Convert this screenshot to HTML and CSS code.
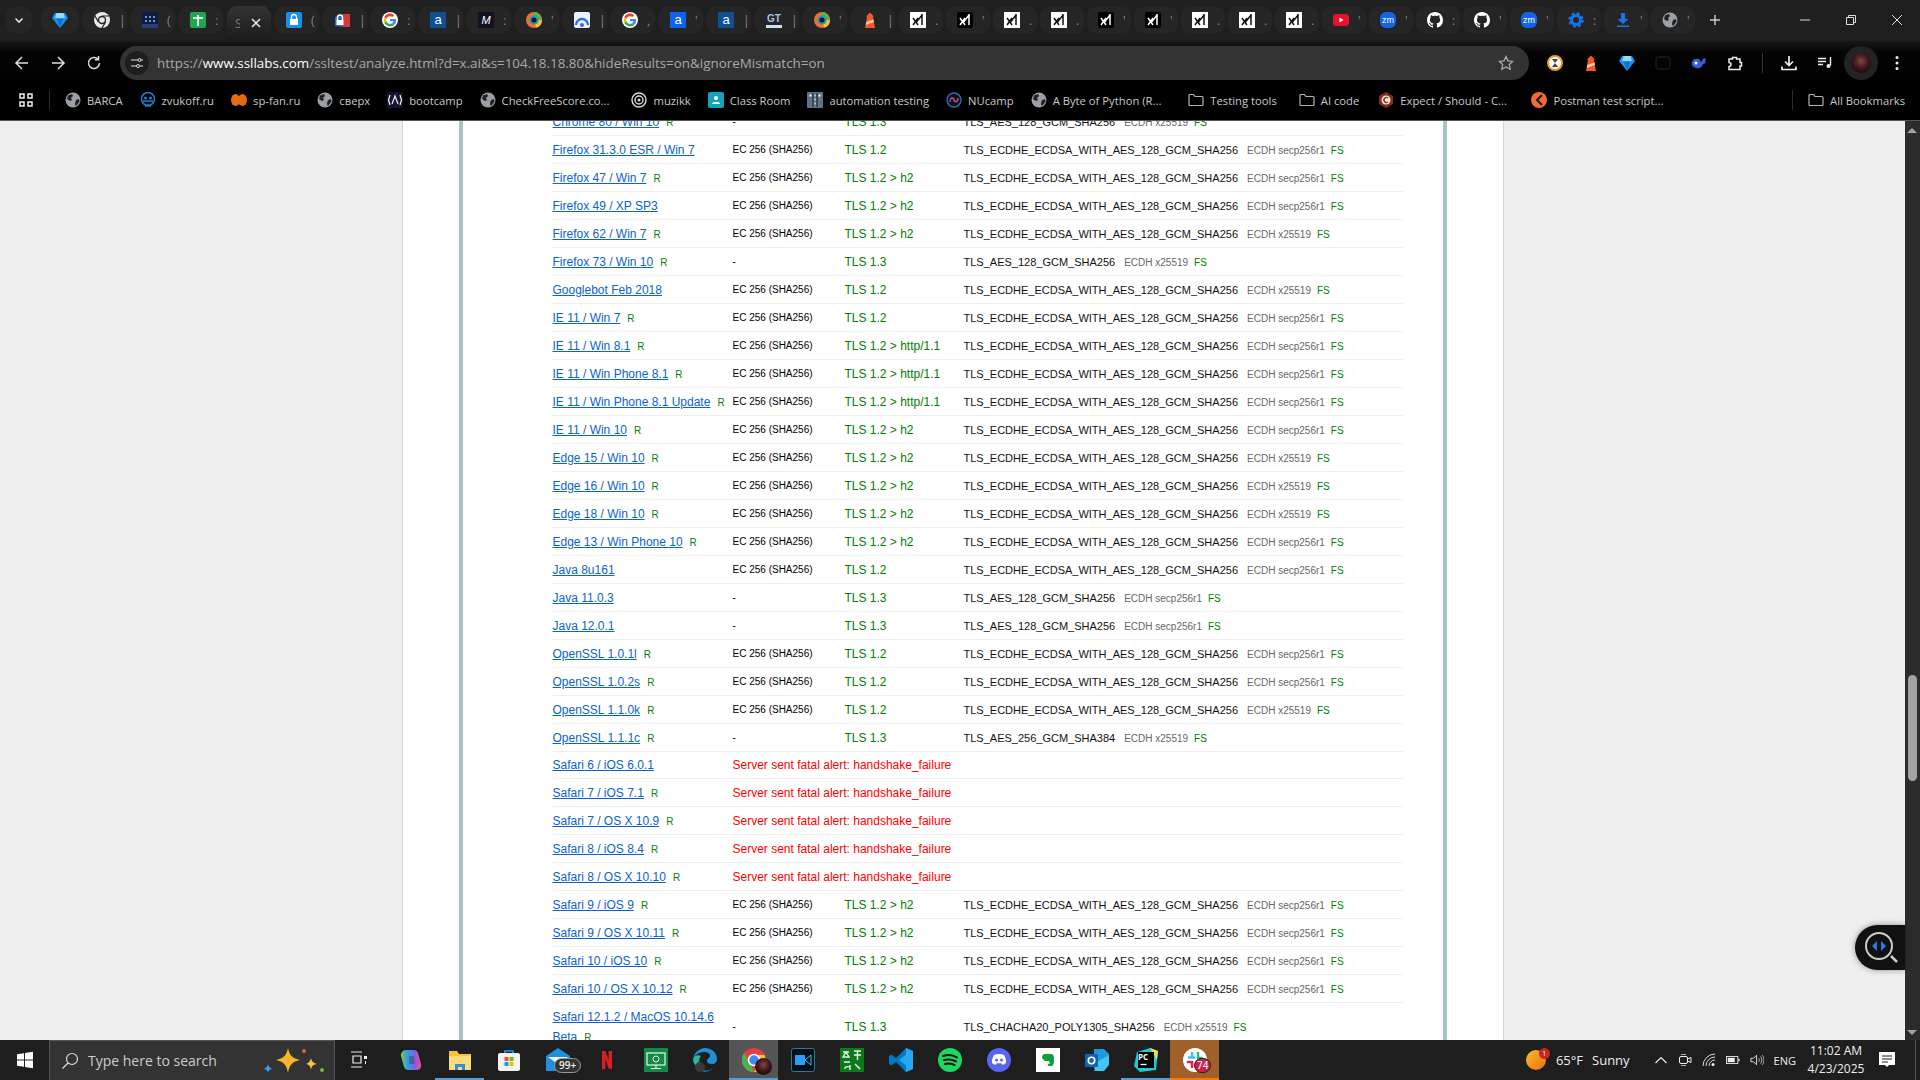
FILE: index.html
```html
<!DOCTYPE html>
<html lang="en">
  <head>
    <meta charset="UTF-8" />
    <title>SSL Server Test: x.ai</title>
    <link rel="stylesheet" href="styles.css">
  </head>
  <body>
    <svg class="defs" aria-hidden="true">
      <symbol id="gem" viewBox="0 0 16 16"><path fill="#1f8fe8" d="M3 1h10l3 5-8 10L0 6z"/><path fill="#8fdafc" d="M4.500 1h7l1.500 5H3z"/><path fill="#0f6fc4" d="M5 7h6l-3 8z"/></symbol>
      <symbol id="chrome" viewBox="0 0 16 16"><circle cx="8" cy="8" r="8" fill="#e8e8e8"/><circle cx="8" cy="8" r="4.200" fill="#222"/><circle cx="8" cy="8" r="2.800" fill="#e8e8e8"/><path stroke="#222" stroke-width="1.200" d="M8 4h7M4.400 10 1 4M11.600 10 8 16"/></symbol>
      <symbol id="goog" viewBox="-6 -6 60 60"><circle cx="24" cy="24" r="30" fill="#fff"/><path fill="#EA4335" d="M24 9.500c3.540 0 6.710 1.220 9.210 3.600l6.850-6.850C35.900 2.380 30.470 0 24 0 14.620 0 6.510 5.380 2.560 13.220l7.980 6.190C12.430 13.720 17.740 9.500 24 9.500z"/><path fill="#4285F4" d="M46.980 24.550c0-1.570-.15-3.090-.38-4.550H24v9.020h12.940c-.58 2.960-2.260 5.480-4.780 7.180l7.730 6c4.510-4.180 7.090-10.360 7.090-17.650z"/><path fill="#FBBC05" d="M10.530 28.590c-.48-1.450-.76-2.990-.76-4.590s.27-3.140.76-4.590l-7.980-6.190C.92 16.460 0 20.120 0 24c0 3.880.92 7.540 2.560 10.780l7.970-6.190z"/><path fill="#34A853" d="M24 48c6.480 0 11.930-2.130 15.890-5.810l-7.730-6c-2.150 1.450-4.920 2.300-8.160 2.300-6.260 0-11.570-4.220-13.470-9.910l-7.980 6.190C6.510 42.620 14.620 48 24 48z"/></symbol>
      <symbol id="ring" viewBox="0 0 16 16"><circle cx="8" cy="8" r="8" fill="#e8702a"/><path fill="#4fb84f" d="M8 0a8 8 0 0 1 8 8h-4a4 4 0 0 0-4-4z"/><path fill="#f2c230" d="M16 8a8 8 0 0 1-6 7.700L9 12a4 4 0 0 0 3-4z"/><circle cx="8" cy="8" r="4.600" fill="#2a93c9"/><circle cx="8" cy="8" r="2.600" fill="#1a1a1a"/></symbol>
      <symbol id="house" viewBox="0 0 16 16"><path fill="#f0592a" d="M5 5h6l2 11H3z"/><path fill="#f8c9aa" d="M4.300 10 11.500 7.500l.4 2.600-8 2.800z"/><path fill="#f0592a" d="M4.500 4 8 .5 11.500 4v1h-7z"/></symbol>
      <symbol id="xw" viewBox="0 0 16 16"><rect width="16" height="16" fill="#fff"/><path stroke="#111" stroke-width="1.500" d="m3 6 5 7m0-7-5 7m9-11v11M12.500 2.500 6.500 10"/></symbol>
      <symbol id="xb" viewBox="0 0 16 16"><rect width="16" height="16" rx="2" fill="#000"/><path stroke="#fff" stroke-width="1.500" d="m3 6 5 7m0-7-5 7m9-11v11M12.500 2.500 6.500 10"/></symbol>
      <symbol id="gh" viewBox="0 0 16 16"><path fill="#fff" d="M8 0C3.580 0 0 3.580 0 8c0 3.540 2.290 6.530 5.470 7.590.4.070.55-.17.55-.38 0-.19-.01-.82-.01-1.490-2.010.37-2.530-.49-2.690-.94-.09-.23-.48-.94-.82-1.130-.28-.15-.68-.52-.01-.53.630-.01 1.080.58 1.230.82.720 1.210 1.870.87 2.330.66.070-.52.28-.87.51-1.070-1.780-.2-3.640-.89-3.640-3.950 0-.87.31-1.590.82-2.150-.08-.2-.36-1.020.08-2.120 0 0 .67-.21 2.200.82.64-.18 1.320-.27 2-.27.68 0 1.360.09 2 .27 1.530-1.040 2.200-.82 2.200-.82.44 1.100.16 1.920.08 2.120.51.56.82 1.270.82 2.150 0 3.070-1.870 3.750-3.650 3.950.29.25.54.73.54 1.480 0 1.070-.01 1.930-.01 2.200 0 .21.15.46.55.38A8.013 8.013 0 0 0 16 8c0-4.420-3.580-8-8-8z"/></symbol>
      <symbol id="globe" viewBox="0 0 16 16"><circle cx="8" cy="8" r="7.500" fill="#9aa0a6"/><path fill="#222" d="M3 3.500 7 2l1 2-2 2 1 2-2 1-3-2zM11 8l3-1 .5 2.500L12 13l-1.500 1L10 11z"/></symbol>
      <symbol id="folder" viewBox="0 0 16 16"><path fill="none" stroke="#b4b4b4" stroke-width="1.200" d="M1 3.500a1 1 0 0 1 1-1h3.500L7 4.500h7a1 1 0 0 1 1 1v7a1 1 0 0 1-1 1H2a1 1 0 0 1-1-1z"/></symbol>
    </svg>

    <header class="chrome">
      <div class="tabstrip">
        <div class="tab-menu"><svg width="12" height="12" viewBox="0 0 12 12"><path d="m2.500 4.500 3.500 3.500 3.500-3.500" fill="none" stroke="#ddd" stroke-width="1.600"/></svg></div>
        <div class="tabs">
          <div class="tab pinned"><svg class="fav"><use href="#gem"/></svg></div>
          <div class="tab"><svg class="fav"><use href="#chrome"/></svg><i>|</i></div>
          <div class="tab"><svg class="fav" viewBox="0 0 16 16"><rect width="16" height="16" fill="#0d1b47"/><path stroke="#9db6e6" stroke-width="1.500" stroke-dasharray="2 2" d="M3 5h10M3 9h10"/><rect y="12" width="16" height="4" fill="#2d3e7a"/></svg><i>(</i></div>
          <div class="tab"><svg class="fav" viewBox="0 0 16 16"><rect width="16" height="16" rx="2" fill="#23a455"/><path stroke="#fff" stroke-width="1.600" d="M3 6h10M8 3v11"/></svg><i>:</i></div>
          <div class="tab active"><i>S</i><svg class="tab-x" width="10" height="10" viewBox="0 0 10 10"><path d="m1 1 8 8m0-8-8 8" stroke="#eee" stroke-width="1.500"/></svg></div>
          <div class="tab"><svg class="fav" viewBox="0 0 16 16"><rect width="16" height="16" rx="2" fill="#1a90e6"/><path fill="none" stroke="#fff" stroke-width="1.300" d="M5.500 7V5a2.500 2.500 0 0 1 5 0v2"/><rect x="4" y="7" width="8" height="6" fill="#fff"/></svg><i>(</i></div>
          <div class="tab"><svg class="fav" viewBox="0 0 16 16"><path fill="#d43a3a" d="M9 2h7v13H9z"/><path fill="#2a6fc0" d="M1 5l8-3v13l-8-1z"/><path fill="none" stroke="#fff" stroke-width="1.400" d="M3.500 8V5.500a2.500 2.500 0 0 1 5 0V8"/><rect x="2.500" y="8" width="7" height="5" fill="#fff"/></svg><i>|</i></div>
          <div class="tab"><svg class="fav"><use href="#goog"/></svg><i>:</i></div>
          <div class="tab"><span class="fav letter a-dark">a</span><i>|</i></div>
          <div class="tab"><span class="fav letter m-box">M</span><i>:</i></div>
          <div class="tab"><svg class="fav"><use href="#ring"/></svg><i>'</i></div>
          <div class="tab"><svg class="fav" viewBox="0 0 16 16"><rect width="16" height="16" rx="2" fill="#eaf2fb"/><path fill="none" stroke="#2b6fe0" stroke-width="2.400" d="M2 13a6 6 0 0 1 12 0"/><circle cx="8" cy="13" r="2" fill="#2b6fe0"/></svg><i>|</i></div>
          <div class="tab"><svg class="fav"><use href="#goog"/></svg><i>,</i></div>
          <div class="tab"><span class="fav letter a-bright">a</span><i>'</i></div>
          <div class="tab"><span class="fav letter a-dark">a</span><i>|</i></div>
          <div class="tab"><span class="fav letter gt">GT</span><i>|</i></div>
          <div class="tab"><svg class="fav"><use href="#ring"/></svg><i>'</i></div>
          <div class="tab"><svg class="fav"><use href="#house"/></svg><i>|</i></div>
          <div class="tab"><svg class="fav"><use href="#xw"/></svg><i>.</i></div>
          <div class="tab"><svg class="fav"><use href="#xb"/></svg><i>'</i></div>
          <div class="tab"><svg class="fav"><use href="#xw"/></svg><i>.</i></div>
          <div class="tab"><svg class="fav"><use href="#xw"/></svg><i>.</i></div>
          <div class="tab"><svg class="fav"><use href="#xb"/></svg><i>'</i></div>
          <div class="tab"><svg class="fav"><use href="#xb"/></svg><i>'</i></div>
          <div class="tab"><svg class="fav"><use href="#xw"/></svg><i>.</i></div>
          <div class="tab"><svg class="fav"><use href="#xw"/></svg><i>.</i></div>
          <div class="tab"><svg class="fav"><use href="#xw"/></svg><i>.</i></div>
          <div class="tab"><svg class="fav" viewBox="0 0 16 16"><rect y="2" width="16" height="12" rx="3" fill="#e8112d"/><path fill="#fff" d="m6.500 5.500 4 2.500-4 2.500z"/></svg><i>'</i></div>
          <div class="tab"><span class="fav letter zm">zm</span><i>'</i></div>
          <div class="tab"><svg class="fav"><use href="#gh"/></svg><i>:</i></div>
          <div class="tab"><svg class="fav"><use href="#gh"/></svg><i>'</i></div>
          <div class="tab"><span class="fav letter zm">zm</span><i>'</i></div>
          <div class="tab"><svg class="fav" viewBox="0 0 16 16"><circle cx="8" cy="8" r="4.500" fill="none" stroke="#1a73e8" stroke-width="3"/><circle cx="8" cy="8" r="6.500" fill="none" stroke="#1a73e8" stroke-width="2.400" stroke-dasharray="2.800 2.300"/></svg><i>:</i></div>
          <div class="tab"><svg class="fav" viewBox="0 0 16 16"><path fill="#1a73e8" d="M6 1h4v6h3.500L8 12 2.500 7H6zM2 13.500h12V15H2z"/></svg><i>'</i></div>
          <div class="tab"><svg class="fav"><use href="#globe"/></svg><i>'</i></div>
        </div>
        <svg class="newtab" width="12" height="12" viewBox="0 0 12 12"><path d="M6 1v10M1 6h10" stroke="#ccc" stroke-width="1.400"/></svg>
        <div class="winbtns">
          <svg width="10" height="10" viewBox="0 0 10 10"><path d="M0 5h10" stroke="#ddd"/></svg>
          <svg width="10" height="10" viewBox="0 0 10 10"><path d="M.5 2.500h7v7h-7zM2.500 2.500v-2h7v7h-2" fill="none" stroke="#ddd"/></svg>
          <svg width="10" height="10" viewBox="0 0 10 10"><path d="m0 0 10 10M10 0 0 10" stroke="#ddd"/></svg>
        </div>
      </div>

      <div class="toolbar">
        <svg class="nav" viewBox="0 0 16 16"><path d="M14 8H2.500M8 2 2 8l6 6" fill="none" stroke="#ddd" stroke-width="1.500"/></svg>
        <svg class="nav" viewBox="0 0 16 16"><path d="M2 8h11.500M8 2l6 6-6 6" fill="none" stroke="#ddd" stroke-width="1.500"/></svg>
        <svg class="nav" viewBox="0 0 16 16"><path d="M13.500 8A5.500 5.500 0 1 1 12 4.200M12.500 1v3.800H8.800" fill="none" stroke="#ddd" stroke-width="1.500"/></svg>
        <div class="omnibox">
          <span class="siteinfo"><svg width="14" height="14" viewBox="0 0 14 14"><path d="M1 4h7M1 10h5M10 10h3M11 4h2" stroke="#ddd" stroke-width="1.200"/><circle cx="9.500" cy="4" r="1.500" fill="none" stroke="#ddd"/><circle cx="8" cy="10" r="1.500" fill="none" stroke="#ddd"/></svg></span>
          <span class="url">https://<b>www.ssllabs.com</b>/ssltest/analyze.html?d=x.ai&amp;s=104.18.18.80&amp;hideResults=on&amp;ignoreMismatch=on</span>
          <svg class="star" width="16" height="16" viewBox="0 0 16 16"><path d="m8 1.500 2 4.300 4.700.6-3.400 3.200.9 4.700L8 12l-4.200 2.300.9-4.700L1.300 6.400 6 5.800z" fill="none" stroke="#aaa" stroke-width="1.300"/></svg>
        </div>
        <div class="extensions">
          <svg class="ext" viewBox="0 0 16 16"><circle cx="8" cy="8" r="7" fill="#fff" stroke="#f09a1a" stroke-width="2"/><path d="M5 4h6L5 12h6z" fill="#444"/></svg>
          <svg class="ext"><use href="#house"/></svg>
          <svg class="ext"><use href="#gem"/></svg>
          <svg class="ext" viewBox="0 0 16 16"><rect x="1" y="2" width="14" height="12" rx="2" fill="none" stroke="#222"/></svg>
          <svg class="ext" viewBox="0 0 16 16"><path fill="#3b5bdb" d="M1 7c1-3 4-4 7-3l2 3 3-4 2 1-1 3 1 1-3 1c-1 4-4 5-7 4C2 12 0 10 1 7z"/><circle cx="5" cy="8" r="1.500" fill="#fff"/></svg>
          <svg class="ext" viewBox="0 0 16 16"><path fill="none" stroke="#eee" stroke-width="1.500" d="M2 4h3.500V2.500h4V4H13v3.500h1.500v3.500H13v3.500H2v-3a2 2 0 0 0 0-4z"/></svg>
          <span class="tb-sep"></span>
          <svg class="ext" viewBox="0 0 16 16"><path d="M8 1v9M4 6.500 8 10.500l4-4M1 11.500V14.500h14v-3" fill="none" stroke="#eee" stroke-width="1.700"/></svg>
          <svg class="ext" viewBox="0 0 16 16"><path d="M1 3.500h8M1 6.500h8M1 9.500h5" stroke="#eee" stroke-width="1.400"/><path d="M13.500 2v8.500" stroke="#eee" stroke-width="1.400"/><circle cx="11.500" cy="11" r="2" fill="#eee"/></svg>
          <span class="avatar-pill"><span class="avatar"></span></span>
          <svg class="dots" viewBox="0 0 4 16"><circle cx="2" cy="2.500" r="1.500" fill="#eee"/><circle cx="2" cy="8" r="1.500" fill="#eee"/><circle cx="2" cy="13.500" r="1.500" fill="#eee"/></svg>
        </div>
      </div>

      <nav class="bookmarks">
        <svg class="apps" viewBox="0 0 14 14"><path d="M1 1h4v4H1zM9 1h4v4H9zM1 9h4v4H1zM9 9h4v4H9z" fill="none" stroke="#eee" stroke-width="1.500"/></svg>
        <span class="bm-sep"></span>
        <a class="bm"><svg class="bm-ic"><use href="#globe"/></svg>BARCA</a>
        <a class="bm"><svg class="bm-ic" viewBox="0 0 16 16"><circle cx="8" cy="7" r="6.500" fill="none" stroke="#1e7fd0" stroke-width="1.500"/><path d="M3 9h10M5 12l1 3M8 12v3M11 12l-1 3" stroke="#1e7fd0" stroke-width="1.500"/><circle cx="5.500" cy="6" r="1.500" fill="#1e7fd0"/><circle cx="10.500" cy="6" r="1.500" fill="#1e7fd0"/></svg>zvukoff.ru</a>
        <a class="bm"><svg class="bm-ic" viewBox="0 0 16 16"><ellipse cx="4.500" cy="8" rx="4.500" ry="6" fill="#e56a12"/><ellipse cx="11.500" cy="8" rx="4.500" ry="6" fill="#e56a12"/></svg>sp-fan.ru</a>
        <a class="bm"><svg class="bm-ic"><use href="#globe"/></svg>сверх</a>
        <a class="bm"><svg class="bm-ic" viewBox="0 0 16 16"><rect width="16" height="16" rx="3" fill="#151533"/><path d="M5 12 8 4l3 8M3 3 1.500 8 3 13M13 3l1.500 5-1.500 5" fill="none" stroke="#eee" stroke-width="1.200"/></svg>bootcamp</a>
        <a class="bm long"><svg class="bm-ic"><use href="#globe"/></svg>CheckFreeScore.co...</a>
        <a class="bm"><svg class="bm-ic" viewBox="0 0 16 16"><circle cx="8" cy="8" r="7" fill="none" stroke="#ddd" stroke-width="1.400"/><circle cx="8" cy="8" r="4" fill="none" stroke="#ddd" stroke-width="1.400"/><circle cx="8" cy="8" r="1.500" fill="#ddd"/></svg>muzikk</a>
        <a class="bm"><svg class="bm-ic" viewBox="0 0 16 16"><rect width="16" height="16" rx="2" fill="#12a3b8"/><circle cx="8" cy="6" r="2" fill="#fff"/><path d="M4 12c0-3 8-3 8 0z" fill="#fff"/></svg>Class Room</a>
        <a class="bm"><svg class="bm-ic" viewBox="0 0 16 16"><rect width="16" height="16" rx="1" fill="#5f7486"/><path d="M6 1v14M10 1v14" stroke="#1a1a1a"/><path d="M7.500 3.500h1M7.500 7.500h1M7.500 11.500h1M2.500 3.500h2M11.500 3.500h2" stroke="#fff" stroke-width="2"/></svg>automation testing</a>
        <a class="bm"><svg class="bm-ic" viewBox="0 0 16 16"><circle cx="8" cy="8" r="7" fill="#111" stroke="#2670c9" stroke-width="1.400"/><path d="M4 10c0-6 4-4 4-2s4 3 4-2" fill="none" stroke="#c04ab8" stroke-width="1.400"/></svg>NUcamp</a>
        <a class="bm cut-wide"><svg class="bm-ic"><use href="#globe"/></svg>A Byte of Python (R...</a>
        <a class="bm long"><svg class="bm-ic"><use href="#folder"/></svg>Testing tools</a>
        <a class="bm loose"><svg class="bm-ic"><use href="#folder"/></svg>AI code</a>
        <a class="bm cut"><svg class="bm-ic" viewBox="0 0 16 16"><path d="M8 0 15 4v8l-7 4-7-4V4z" fill="#8a2a1a"/><circle cx="8" cy="8" r="4.500" fill="#f3e8d8"/><path d="M10 6a2.500 2.500 0 1 0 0 4" fill="none" stroke="#8a2a1a" stroke-width="1.400"/></svg>Expect / Should - C...</a>
        <a class="bm"><svg class="bm-ic" viewBox="0 0 16 16"><circle cx="8" cy="8" r="8" fill="#ef6c35"/><path d="m11 3-5 5 5 5" fill="none" stroke="#1a1a1a" stroke-width="2"/></svg>Postman test script...</a>
        <span class="bm-end"><span class="bm-sep"></span><a class="bm"><svg class="bm-ic"><use href="#folder"/></svg>All Bookmarks</a></span>
      </nav>
    </header>

    <main class="viewport">
      <div class="page">
        <div class="sheet">
          <div class="report">
            <table class="sims">
              <tbody>
                <tr><td class="c-name"><a href="#">Chrome 80 / Win 10</a><span class="r">R</span></td><td class="c-cert">-</td><td class="c-proto">TLS 1.3</td><td><span class="suite">TLS_AES_128_GCM_SHA256</span><span class="kx">ECDH x25519</span><span class="fs">FS</span></td></tr>
                <tr><td class="c-name"><a href="#">Firefox 31.3.0 ESR / Win 7</a></td><td class="c-cert">EC 256 (SHA256)</td><td class="c-proto">TLS 1.2</td><td><span class="suite">TLS_ECDHE_ECDSA_WITH_AES_128_GCM_SHA256</span><span class="kx">ECDH secp256r1</span><span class="fs">FS</span></td></tr>
                <tr><td class="c-name"><a href="#">Firefox 47 / Win 7</a><span class="r">R</span></td><td class="c-cert">EC 256 (SHA256)</td><td class="c-proto">TLS 1.2 &gt; h2</td><td><span class="suite">TLS_ECDHE_ECDSA_WITH_AES_128_GCM_SHA256</span><span class="kx">ECDH secp256r1</span><span class="fs">FS</span></td></tr>
                <tr><td class="c-name"><a href="#">Firefox 49 / XP SP3</a></td><td class="c-cert">EC 256 (SHA256)</td><td class="c-proto">TLS 1.2 &gt; h2</td><td><span class="suite">TLS_ECDHE_ECDSA_WITH_AES_128_GCM_SHA256</span><span class="kx">ECDH secp256r1</span><span class="fs">FS</span></td></tr>
                <tr><td class="c-name"><a href="#">Firefox 62 / Win 7</a><span class="r">R</span></td><td class="c-cert">EC 256 (SHA256)</td><td class="c-proto">TLS 1.2 &gt; h2</td><td><span class="suite">TLS_ECDHE_ECDSA_WITH_AES_128_GCM_SHA256</span><span class="kx">ECDH x25519</span><span class="fs">FS</span></td></tr>
                <tr><td class="c-name"><a href="#">Firefox 73 / Win 10</a><span class="r">R</span></td><td class="c-cert">-</td><td class="c-proto">TLS 1.3</td><td><span class="suite">TLS_AES_128_GCM_SHA256</span><span class="kx">ECDH x25519</span><span class="fs">FS</span></td></tr>
                <tr><td class="c-name"><a href="#">Googlebot Feb 2018</a></td><td class="c-cert">EC 256 (SHA256)</td><td class="c-proto">TLS 1.2</td><td><span class="suite">TLS_ECDHE_ECDSA_WITH_AES_128_GCM_SHA256</span><span class="kx">ECDH x25519</span><span class="fs">FS</span></td></tr>
                <tr><td class="c-name"><a href="#">IE 11 / Win 7</a><span class="r">R</span></td><td class="c-cert">EC 256 (SHA256)</td><td class="c-proto">TLS 1.2</td><td><span class="suite">TLS_ECDHE_ECDSA_WITH_AES_128_GCM_SHA256</span><span class="kx">ECDH secp256r1</span><span class="fs">FS</span></td></tr>
                <tr><td class="c-name"><a href="#">IE 11 / Win 8.1</a><span class="r">R</span></td><td class="c-cert">EC 256 (SHA256)</td><td class="c-proto">TLS 1.2 &gt; http/1.1</td><td><span class="suite">TLS_ECDHE_ECDSA_WITH_AES_128_GCM_SHA256</span><span class="kx">ECDH secp256r1</span><span class="fs">FS</span></td></tr>
                <tr><td class="c-name"><a href="#">IE 11 / Win Phone 8.1</a><span class="r">R</span></td><td class="c-cert">EC 256 (SHA256)</td><td class="c-proto">TLS 1.2 &gt; http/1.1</td><td><span class="suite">TLS_ECDHE_ECDSA_WITH_AES_128_GCM_SHA256</span><span class="kx">ECDH secp256r1</span><span class="fs">FS</span></td></tr>
                <tr><td class="c-name"><a href="#">IE 11 / Win Phone 8.1 Update</a><span class="r">R</span></td><td class="c-cert">EC 256 (SHA256)</td><td class="c-proto">TLS 1.2 &gt; http/1.1</td><td><span class="suite">TLS_ECDHE_ECDSA_WITH_AES_128_GCM_SHA256</span><span class="kx">ECDH secp256r1</span><span class="fs">FS</span></td></tr>
                <tr><td class="c-name"><a href="#">IE 11 / Win 10</a><span class="r">R</span></td><td class="c-cert">EC 256 (SHA256)</td><td class="c-proto">TLS 1.2 &gt; h2</td><td><span class="suite">TLS_ECDHE_ECDSA_WITH_AES_128_GCM_SHA256</span><span class="kx">ECDH secp256r1</span><span class="fs">FS</span></td></tr>
                <tr><td class="c-name"><a href="#">Edge 15 / Win 10</a><span class="r">R</span></td><td class="c-cert">EC 256 (SHA256)</td><td class="c-proto">TLS 1.2 &gt; h2</td><td><span class="suite">TLS_ECDHE_ECDSA_WITH_AES_128_GCM_SHA256</span><span class="kx">ECDH x25519</span><span class="fs">FS</span></td></tr>
                <tr><td class="c-name"><a href="#">Edge 16 / Win 10</a><span class="r">R</span></td><td class="c-cert">EC 256 (SHA256)</td><td class="c-proto">TLS 1.2 &gt; h2</td><td><span class="suite">TLS_ECDHE_ECDSA_WITH_AES_128_GCM_SHA256</span><span class="kx">ECDH x25519</span><span class="fs">FS</span></td></tr>
                <tr><td class="c-name"><a href="#">Edge 18 / Win 10</a><span class="r">R</span></td><td class="c-cert">EC 256 (SHA256)</td><td class="c-proto">TLS 1.2 &gt; h2</td><td><span class="suite">TLS_ECDHE_ECDSA_WITH_AES_128_GCM_SHA256</span><span class="kx">ECDH x25519</span><span class="fs">FS</span></td></tr>
                <tr><td class="c-name"><a href="#">Edge 13 / Win Phone 10</a><span class="r">R</span></td><td class="c-cert">EC 256 (SHA256)</td><td class="c-proto">TLS 1.2 &gt; h2</td><td><span class="suite">TLS_ECDHE_ECDSA_WITH_AES_128_GCM_SHA256</span><span class="kx">ECDH secp256r1</span><span class="fs">FS</span></td></tr>
                <tr><td class="c-name"><a href="#">Java 8u161</a></td><td class="c-cert">EC 256 (SHA256)</td><td class="c-proto">TLS 1.2</td><td><span class="suite">TLS_ECDHE_ECDSA_WITH_AES_128_GCM_SHA256</span><span class="kx">ECDH secp256r1</span><span class="fs">FS</span></td></tr>
                <tr><td class="c-name"><a href="#">Java 11.0.3</a></td><td class="c-cert">-</td><td class="c-proto">TLS 1.3</td><td><span class="suite">TLS_AES_128_GCM_SHA256</span><span class="kx">ECDH secp256r1</span><span class="fs">FS</span></td></tr>
                <tr><td class="c-name"><a href="#">Java 12.0.1</a></td><td class="c-cert">-</td><td class="c-proto">TLS 1.3</td><td><span class="suite">TLS_AES_128_GCM_SHA256</span><span class="kx">ECDH secp256r1</span><span class="fs">FS</span></td></tr>
                <tr><td class="c-name"><a href="#">OpenSSL 1.0.1l</a><span class="r">R</span></td><td class="c-cert">EC 256 (SHA256)</td><td class="c-proto">TLS 1.2</td><td><span class="suite">TLS_ECDHE_ECDSA_WITH_AES_128_GCM_SHA256</span><span class="kx">ECDH secp256r1</span><span class="fs">FS</span></td></tr>
                <tr><td class="c-name"><a href="#">OpenSSL 1.0.2s</a><span class="r">R</span></td><td class="c-cert">EC 256 (SHA256)</td><td class="c-proto">TLS 1.2</td><td><span class="suite">TLS_ECDHE_ECDSA_WITH_AES_128_GCM_SHA256</span><span class="kx">ECDH secp256r1</span><span class="fs">FS</span></td></tr>
                <tr><td class="c-name"><a href="#">OpenSSL 1.1.0k</a><span class="r">R</span></td><td class="c-cert">EC 256 (SHA256)</td><td class="c-proto">TLS 1.2</td><td><span class="suite">TLS_ECDHE_ECDSA_WITH_AES_128_GCM_SHA256</span><span class="kx">ECDH x25519</span><span class="fs">FS</span></td></tr>
                <tr><td class="c-name"><a href="#">OpenSSL 1.1.1c</a><span class="r">R</span></td><td class="c-cert">-</td><td class="c-proto">TLS 1.3</td><td><span class="suite">TLS_AES_256_GCM_SHA384</span><span class="kx">ECDH x25519</span><span class="fs">FS</span></td></tr>
                <tr class="short"><td class="c-name"><a href="#">Safari 6 / iOS 6.0.1</a></td><td class="c-fail" colspan="3">Server sent fatal alert: handshake_failure</td></tr>
                <tr><td class="c-name"><a href="#">Safari 7 / iOS 7.1</a><span class="r">R</span></td><td class="c-fail" colspan="3">Server sent fatal alert: handshake_failure</td></tr>
                <tr><td class="c-name"><a href="#">Safari 7 / OS X 10.9</a><span class="r">R</span></td><td class="c-fail" colspan="3">Server sent fatal alert: handshake_failure</td></tr>
                <tr><td class="c-name"><a href="#">Safari 8 / iOS 8.4</a><span class="r">R</span></td><td class="c-fail" colspan="3">Server sent fatal alert: handshake_failure</td></tr>
                <tr><td class="c-name"><a href="#">Safari 8 / OS X 10.10</a><span class="r">R</span></td><td class="c-fail" colspan="3">Server sent fatal alert: handshake_failure</td></tr>
                <tr><td class="c-name"><a href="#">Safari 9 / iOS 9</a><span class="r">R</span></td><td class="c-cert">EC 256 (SHA256)</td><td class="c-proto">TLS 1.2 &gt; h2</td><td><span class="suite">TLS_ECDHE_ECDSA_WITH_AES_128_GCM_SHA256</span><span class="kx">ECDH secp256r1</span><span class="fs">FS</span></td></tr>
                <tr><td class="c-name"><a href="#">Safari 9 / OS X 10.11</a><span class="r">R</span></td><td class="c-cert">EC 256 (SHA256)</td><td class="c-proto">TLS 1.2 &gt; h2</td><td><span class="suite">TLS_ECDHE_ECDSA_WITH_AES_128_GCM_SHA256</span><span class="kx">ECDH secp256r1</span><span class="fs">FS</span></td></tr>
                <tr><td class="c-name"><a href="#">Safari 10 / iOS 10</a><span class="r">R</span></td><td class="c-cert">EC 256 (SHA256)</td><td class="c-proto">TLS 1.2 &gt; h2</td><td><span class="suite">TLS_ECDHE_ECDSA_WITH_AES_128_GCM_SHA256</span><span class="kx">ECDH secp256r1</span><span class="fs">FS</span></td></tr>
                <tr><td class="c-name"><a href="#">Safari 10 / OS X 10.12</a><span class="r">R</span></td><td class="c-cert">EC 256 (SHA256)</td><td class="c-proto">TLS 1.2 &gt; h2</td><td><span class="suite">TLS_ECDHE_ECDSA_WITH_AES_128_GCM_SHA256</span><span class="kx">ECDH secp256r1</span><span class="fs">FS</span></td></tr>
                <tr class="tall"><td class="c-name"><a href="#">Safari 12.1.2 / MacOS 10.14.6<br />Beta</a><span class="r">R</span></td><td class="c-cert">-</td><td class="c-proto">TLS 1.3</td><td><span class="suite">TLS_CHACHA20_POLY1305_SHA256</span><span class="kx">ECDH x25519</span><span class="fs">FS</span></td></tr>
              </tbody>
            </table>
          </div>
        </div>
      </div>
      <div class="scrollbar">
        <span class="arrow up"></span>
        <span class="thumb"></span>
        <span class="arrow down"></span>
      </div>
      <div class="bubble">
        <svg width="34" height="34" viewBox="0 0 34 34"><circle cx="15" cy="15" r="13" fill="none" stroke="#ccc" stroke-width="2"/><path d="m27 25 6 6" stroke="#ccc" stroke-width="2.500"/><path d="m13 10-5 5 5 5zM17 10l5 5-5 5z" fill="#2a7de1"/></svg>
      </div>
    </main>

    <footer class="taskbar">
      <div class="start"><svg width="18" height="18" viewBox="0 0 18 18"><path fill="#fff" d="M1 3.200 8 2.200v6.300H1zM9 2l8-1.200v7.700H9zM1 9.500h7v6.300l-7-1zM9 9.500h8v7.700L9 16z"/></svg></div>
      <div class="search">
        <svg width="18" height="18" viewBox="0 0 18 18"><circle cx="11" cy="7" r="5.500" fill="none" stroke="#ddd" stroke-width="1.200"/><path d="M7 11 1.500 16.500" stroke="#ddd" stroke-width="1.200"/></svg>
        <span class="search-text">Type here to search</span>
        <svg class="sparkles" width="62" height="32" viewBox="0 0 62 32"><path fill="#f7b52c" d="M24 3c1.500 7.500 4.500 10.500 12 12-7.500 1.500-10.500 4.500-12 13-1.500-8.500-4.500-11.500-12-13 7.500-1.500 10.500-4.500 12-12z"/><path fill="#f7c23c" d="M47 13c.6 3 2 5 6 6-4 .6-5.400 2-6 6-.6-4-2-5.400-5-6 3-1 4.400-3 5-6z"/><path fill="#2a9df4" d="M4 19c.5 2 1.500 3.500 4 5-2.500.5-3.500 1.500-4 4-.5-2.500-1.500-3.500-4-4 2.500-1.500 3.500-3 4-5z"/><circle cx="40" cy="6" r="2" fill="#e8662c"/><circle cx="58" cy="25" r="2" fill="#7ab648"/></svg>
      </div>
      <div class="tb-slot taskview"><svg width="18" height="18" viewBox="0 0 18 18"><path d="M1 1h11M1 16h11M3 5h8v7H3z" fill="none" stroke="#eee" stroke-width="1.200"/><rect x="14" y="5" width="3" height="3" fill="#eee"/><path d="M15.500 10v3" stroke="#eee"/></svg></div>
      <div class="tb-apps">
        <div class="tb-slot"><svg class="app" viewBox="0 0 24 24"><defs><linearGradient id="cop" x1="0" y1="0" x2="1" y2="0"><stop offset="0" stop-color="#8ac24a"/><stop offset=".35" stop-color="#2a9de8"/><stop offset=".7" stop-color="#8a5ce0"/><stop offset="1" stop-color="#e8508a"/></linearGradient></defs><path fill="url(#cop)" d="M7 2h8c2 0 3 1 4 3l3 11c.7 3-1 6-4 6H9c-2 0-3-1-4-3L2 8c-.7-3 2-6 5-6z"/><path fill="#1e1e1e" d="M10 8h5l1 8h-6z" opacity=".3"/></svg></div>
        <div class="tb-slot open"><svg class="app" viewBox="0 0 24 24"><path fill="#f5c33c" d="M1 3h8l2 3h12v16H1z"/><path fill="#fbdc7c" d="M1 8h22v14H1z"/><path fill="#2f8fd8" d="M7 22v-6h10v6h-3v-3h-4v3z"/></svg></div>
        <div class="tb-slot"><svg class="app" viewBox="0 0 24 24"><path d="M8 6V3h8v3" fill="none" stroke="#2a9df4" stroke-width="1.600"/><rect x="1" y="5" width="22" height="18" rx="2" fill="#f2f2f2"/><path fill="#f25022" d="M7.500 9h4v4h-4z"/><path fill="#7fba00" d="M12.500 9h4v4h-4z"/><path fill="#00a4ef" d="M7.500 14h4v4h-4z"/><path fill="#ffb900" d="M12.500 14h4v4h-4z"/></svg></div>
        <div class="tb-slot"><svg class="app" viewBox="0 0 24 24"><path fill="#1f8fe0" d="M0 8 12 0l12 8v15H0z"/><path fill="#fff" d="M2 9h20L12 16z"/></svg><span class="count">99+</span></div>
        <div class="tb-slot"><svg class="app" viewBox="0 0 24 24"><path fill="#d81f26" d="M7 3h3.400l3.200 9V3H17v18l-3.400-.6L10.400 11v10L7 21.500z"/></svg></div>
        <div class="tb-slot"><svg class="app" viewBox="0 0 24 24"><rect width="24" height="24" fill="#138a43"/><rect x="3" y="5" width="18" height="12" fill="none" stroke="#e8f5ec" stroke-width="1.200"/><path d="M12 17v3M7 20.500h10" stroke="#e8f5ec" stroke-width="1.200"/><circle cx="12" cy="11" r="3" fill="none" stroke="#e8f5ec"/></svg></div>
        <div class="tb-slot"><svg class="app" viewBox="0 0 24 24"><path fill="#1f8fd8" d="M12 0c7 0 12 5 12 11 0 3-2 5-5 5-3 0-5-1-5-3 0-3 3-3 3-5 0-2-2-4-6-4C5 4 1 8 0 11 1 5 6 0 12 0z"/><path fill="#2db6a8" d="M0 11c1-3 5-5 8-3-3 3-2 9 1 13C4 20 0 16 0 11z"/><path fill="#1565b0" d="M9 21c3 2 8 2 12-2-3 4-7 5-10 5-1 0-2-1-2-3z"/><circle cx="7" cy="19" r="5" fill="#3a3a3a"/></svg></div>
        <div class="tb-slot active open"><svg class="app" viewBox="0 0 24 24"><circle cx="12" cy="12" r="12" fill="#e0413a"/><path fill="#4caf50" d="M2 5l7 12 3 7A12 12 0 0 1 2 5z"/><path fill="#fbc02d" d="M12 7h10.500A12 12 0 0 1 12 24l5-10z"/><circle cx="12" cy="12" r="5.500" fill="#4285f4" stroke="#fff" stroke-width="1.500"/></svg><span class="avatar small"></span></div>
        <div class="tb-slot"><svg class="app" viewBox="0 0 24 24"><rect x=".5" y=".5" width="23" height="23" rx="2" fill="#071018" stroke="#1f7f9a"/><path fill="#2a9df4" d="M4 7h10v10H4z"/><path fill="none" stroke="#3ac0e8" d="m14 12 6-5v10z"/></svg></div>
        <div class="tb-slot"><svg class="app" viewBox="0 0 24 24"><rect width="24" height="24" fill="#0d7a1a"/><path d="M3 4h6M6 4l-3 5h6zM14 3h7M17.500 3v9M14 7h7" fill="none" stroke="#e8f5ec" stroke-width="1.400"/><path d="M4 14h6M5 21c-1-3 6-3 5-1v2M10 17v5" fill="none" stroke="#e8f5ec" stroke-width="1.400"/><path d="M15 16l5 5" stroke="#e8f5ec" stroke-width="1.400"/></svg></div>
        <div class="tb-slot"><svg class="app" viewBox="0 0 24 24"><path fill="#0078c8" d="M17 0 24 3v18l-7 3L7 14l-4.500 3.500L0 16V8l2.500-1.500L7 10z"/><path fill="#2aa6f0" d="M17 0 24 3v18l-7 3V6.500L10 12l7 5.500z"/></svg></div>
        <div class="tb-slot"><svg class="app" viewBox="0 0 24 24"><circle cx="12" cy="12" r="12" fill="#1ed760"/><path d="M5 8c5-1.500 10-1 14 1.500M6 12c4-1 8-.7 12 1.300M7 16c3-.8 6-.5 9.500 1" fill="none" stroke="#111" stroke-width="2" stroke-linecap="round"/></svg></div>
        <div class="tb-slot"><svg class="app" viewBox="0 0 24 24"><circle cx="12" cy="12" r="12" fill="#5865f2"/><path fill="#fff" d="M7 7c3-1.300 7-1.300 10 0 1.500 2.500 2.200 5 2 8-1.200 1-2.500 1.500-3.700 1.800l-1-1.500H9.700l-1 1.500C7.500 16.500 6.200 16 5 15c-.2-3 .5-5.500 2-8z"/><circle cx="9.500" cy="12" r="1.500" fill="#5865f2"/><circle cx="14.500" cy="12" r="1.500" fill="#5865f2"/></svg></div>
        <div class="tb-slot"><svg class="app" viewBox="0 0 24 24"><rect width="24" height="24" fill="#fff"/><path fill="#0aa13c" d="M8 6h7c3 0 3 3 3 7 0 3-1 5-3 5h-2c-1 0-2-1-1-2 1-.5 2 0 2 0l-1-3H9c-2-1-3-3-3-5z"/></svg></div>
        <div class="tb-slot"><svg class="app" viewBox="0 0 24 24"><path fill="#1e9be0" d="M9 1h10l5 5v10l-5 7H11l-2-3z"/><path fill="#50d9ff" d="M12 14 24 7v10l-5 6H9z" opacity=".7"/><rect y="6" width="13" height="13" rx="1" fill="#0f63b8"/><circle cx="6.500" cy="12.500" r="3.200" fill="none" stroke="#fff" stroke-width="1.600"/></svg></div>
        <div class="tb-slot open"><svg class="app" viewBox="0 0 24 24"><path fill="#20c8d8" d="M3 4 16 0 24 3 22 22 6 24 0 18z"/><path fill="#f0e040" d="M16 0 24 3l-1 9z"/><rect x="4" y="4" width="16" height="16" fill="#000"/><path d="M6.500 16.500h6" stroke="#fff" stroke-width="1.300"/></svg><span class="pc-label">PC</span></div>
        <div class="tb-slot notify"><svg class="app" viewBox="0 0 24 24"><circle cx="12" cy="12" r="12" fill="#fff"/><path d="M6 9.500h5M9 5v4.500" stroke="#36c5f0" stroke-width="2.500" stroke-linecap="round"/><path d="M15 5v5h4" stroke="#2eb67d" stroke-width="2.500" stroke-linecap="round" fill="none"/><path d="M18 14h-5M15 18v-4" stroke="#ecb22e" stroke-width="2.500" stroke-linecap="round"/><path d="M9 19v-5H5" stroke="#e01e5a" stroke-width="2.500" stroke-linecap="round" fill="none"/></svg><span class="count red">74</span></div>
      </div>
      <div class="tray">
        <span class="sun"><span class="sun-badge">1</span></span>
        <span class="temp">65°F</span>
        <span class="cond">Sunny</span>
        <svg class="tray-ic chevron" viewBox="0 0 14 14"><path d="m1.500 10 5.500-5.500 5.500 5.500" fill="none" stroke="#eee" stroke-width="1.200"/></svg>
        <svg class="tray-ic" viewBox="0 0 14 14"><rect x="1.500" y="3.500" width="8" height="7" rx="1.500" fill="none" stroke="#eee"/><path d="m9.500 6 3.500-1.500v5L9.500 8" fill="none" stroke="#eee"/><path d="M3 1.500h5M3 12.500h5" stroke="#eee" stroke-width=".7"/></svg>
        <svg class="tray-ic" viewBox="0 0 14 14"><path d="M1 13a12 12 0 0 1 12-12M4 13a9 9 0 0 1 9-9M7 13a6 6 0 0 1 6-6" fill="none" stroke="#eee" stroke-width=".9"/><circle cx="11" cy="11.500" r="1.500" fill="#eee"/></svg>
        <svg class="tray-ic" viewBox="0 0 16 14"><rect x=".5" y="3" width="13" height="8" fill="none" stroke="#eee"/><rect x="2" y="4.500" width="8" height="5" fill="#eee"/><rect x="14" y="5.500" width="1.500" height="3" fill="#eee"/></svg>
        <svg class="tray-ic" viewBox="0 0 16 14"><path d="M1 5h3l3.500-3.500v11L4 9H1z" fill="none" stroke="#eee"/><path d="M10 5c1 1 1 3 0 4M12 3c2 2 2 6 0 8M14 1.500c2.500 3 2.500 8 0 11" fill="none" stroke="#eee" stroke-width=".8"/></svg>
        <span class="lang">ENG</span>
        <span class="clock"><span>11:02 AM</span><span>4/23/2025</span></span>
        <svg class="notif" width="16" height="16" viewBox="0 0 16 16"><path fill="#fff" d="M0 0h16v13h-6l-2 2-2-2H0z"/><path d="M3 4h10M3 7h10M3 10h6" stroke="#222"/></svg>
        <span class="show-desktop"></span>
      </div>
    </footer>
  </body>
</html>
```

FILE: styles.css
```css
* {
  box-sizing: border-box;
}
html,
body {
  margin: 0;
  height: 100%;
}
body {
  display: flex;
  flex-direction: column;
  width: 1920px;
  height: 1080px;
  overflow: hidden;
  font-family: "Liberation Sans", Arial, sans-serif;
  background: #000;
}
.defs {
  display: none;
}

/* browser chrome */
.chrome {
  flex: 0 0 120px;
  color: #ddd;
  font-family: "Open Sans", sans-serif;
  background: linear-gradient(#1f1f1f 0, #1f1f1f 40px, #161616 42px, #050505 52px, #000 80px);
}
.tabstrip {
  display: flex;
  align-items: center;
  height: 40px;
  padding-left: 6px;
  position: relative;
}
.tab-menu {
  flex: 0 0 26px;
  height: 26px;
  margin-right: 9px;
  border-radius: 8px;
  background: #252525;
  display: flex;
  align-items: center;
  justify-content: center;
}
.tabs {
  display: flex;
  align-items: center;
  height: 40px;
}
.tab {
  flex: 0 0 44px;
  width: 44px;
  height: 26px;
  margin-right: 4px;
  padding-left: 11px;
  display: flex;
  align-items: center;
  gap: 9px;
  overflow: hidden;
  border-radius: 8px;
  background: #252525;
}
.tab:nth-child(n + 19) {
  margin-right: 3px;
}
.tab.pinned {
  flex-basis: 38px;
  width: 38px;
  margin-right: 4px;
}
.tab i {
  font-style: normal;
  font-size: 12px;
  color: #888;
}
.tab.active {
  height: 34px;
  margin-top: 6px;
  padding-left: 8px;
  gap: 9px;
  border-radius: 10px 10px 0 0;
  background: linear-gradient(#333, #1c1c1c);
}
.tab.active i {
  color: #777;
  width: 5px;
  overflow: hidden;
}
.fav {
  flex: 0 0 16px;
  width: 16px;
  height: 16px;
}
.letter {
  display: flex;
  align-items: center;
  justify-content: center;
  font-family: "Liberation Sans", sans-serif;
  font-size: 13px;
  line-height: 16px;
  color: #fff;
}
.a-dark {
  background: #0f4f92;
}
.a-bright {
  background: #0f62f0;
}
.m-box {
  background: #111122;
  font-style: italic;
  font-size: 11px;
}
.gt {
  font-size: 10px;
  font-weight: bold;
  color: #a9c4e6;
  border-bottom: 3px solid #cfe0f2;
}
.zm {
  background: #1464e8;
  border-radius: 6px;
  font-size: 9px;
}
.tab-x {
  flex: 0 0 10px;
  margin-left: 2px;
}
.newtab {
  position: absolute;
  left: 1709px;
  top: 14px;
}
.winbtns {
  margin-left: auto;
  display: flex;
  gap: 36px;
  padding-right: 18px;
  height: 20px;
  align-items: center;
}
.toolbar {
  display: flex;
  align-items: center;
  height: 40px;
  padding: 6px 0 0 14px;
}
.nav {
  flex: 0 0 16px;
  width: 16px;
  height: 16px;
  margin-right: 20px;
}
.omnibox {
  flex: 0 0 1409px;
  height: 34px;
  margin-left: -2px;
  border-radius: 17px;
  background: #333;
  display: flex;
  align-items: center;
  padding-left: 5px;
}
.siteinfo {
  width: 24px;
  height: 24px;
  border-radius: 50%;
  background: #1e1e1e;
  display: flex;
  align-items: center;
  justify-content: center;
}
.url {
  margin-left: 8px;
  font-size: 13.4px;
  color: #a8a8a8;
  white-space: nowrap;
}
.url b {
  font-weight: normal;
  color: #fff;
}
.star {
  margin-left: auto;
  margin-right: 15px;
}
.extensions {
  display: flex;
  align-items: center;
  margin-left: 18px;
}
.ext {
  flex: 0 0 16px;
  width: 16px;
  height: 16px;
  margin-right: 20px;
}
.tb-sep {
  width: 1px;
  height: 20px;
  background: #333;
  margin: 0 18px 0 -1px;
}
.avatar-pill {
  width: 34px;
  height: 34px;
  margin-left: -9px;
  border-radius: 50%;
  background: #232323;
  display: flex;
  align-items: center;
  justify-content: center;
}
.avatar {
  display: block;
  width: 20px;
  height: 20px;
  border-radius: 50%;
  background: radial-gradient(circle at 50% 40%, #7a4a3a 0, #4a1a20 40%, #180c10 75%);
}
.dots {
  width: 4px;
  height: 16px;
  margin-left: 17px;
}
.bookmarks {
  display: flex;
  align-items: center;
  height: 40px;
  padding-left: 19px;
  font-size: 11.25px;
  color: #c8c8c8;
}
.apps {
  width: 14px;
  height: 14px;
  margin-right: 16px;
}
.bm-sep {
  flex: 0 0 1px;
  height: 20px;
  background: #2c2c2c;
  margin-right: 15px;
}
.bm {
  display: flex;
  align-items: center;
  gap: 6px;
  white-space: nowrap;
  margin-right: 17px;
}
.bm.long {
  margin-right: 22px;
}
.bm.loose {
  margin-right: 19px;
}
.bm.cut {
  margin-right: 24.5px;
}
.bm.cut-wide {
  margin-right: 27px;
}
.bm-ic {
  flex: 0 0 16px;
  width: 16px;
  height: 16px;
}
.bm-end {
  display: flex;
  align-items: center;
  margin-left: auto;
}
.bm-end .bm {
  margin-right: 15px;
}

/* page area */
.viewport {
  flex: 1;
  min-height: 0;
  display: flex;
  position: relative;
  border-top: 1px solid #555;
}
.page {
  flex: 1;
  min-width: 0;
  overflow: hidden;
  background: #efefef;
}
.sheet {
  width: 1102px;
  min-height: 100%;
  margin: 0 auto;
  padding: 0 56px;
  background: #fff;
  border-left: 1px solid #c9d9e4;
  border-right: 1px solid #c9d9e4;
}
.report {
  min-height: 919px;
  padding-left: 90px;
  border-left: 4px solid #a6c4c6;
  border-right: 4px solid #a6c4c6;
}
.sims {
  width: 850px;
  margin-top: -13px;
  table-layout: fixed;
  border-collapse: separate;
  border-spacing: 0;
  font-size: 12px;
}
.sims td {
  height: 28px;
  padding: 0;
  border-bottom: 1px solid #eee;
  white-space: nowrap;
  vertical-align: middle;
}
.sims .short td {
  height: 27px;
}
.sims .tall td {
  height: 48px;
}
.c-name {
  width: 180px;
  line-height: 20px;
}
.c-name a {
  color: #0b63ce;
}
.r {
  margin-left: 7px;
  font-size: 10px;
  line-height: 1;
  color: #0a7d0a;
}
.sims .c-cert {
  width: 112px;
  font-size: 10px;
  color: #000;
}
.sims .c-proto {
  width: 119px;
  color: #008000;
}
.sims .c-fail {
  color: #f00;
}
.suite {
  font-size: 11px;
  color: #111;
}
.kx {
  margin-left: 9px;
  font-size: 10px;
  color: #666;
}
.fs {
  margin-left: 6px;
  font-size: 10px;
  color: #008000;
}
.scrollbar {
  flex: 0 0 15px;
  position: relative;
  background: #2c2c2c;
}
.arrow {
  position: absolute;
  left: 2px;
  width: 0;
  height: 0;
  border-left: 5px solid transparent;
  border-right: 5px solid transparent;
}
.arrow.up {
  top: 7px;
  border-bottom: 5px solid #a3a3a3;
}
.arrow.down {
  bottom: 5px;
  border-top: 5px solid #a3a3a3;
}
.thumb {
  position: absolute;
  left: 3px;
  top: 554px;
  width: 9px;
  height: 106px;
  border-radius: 5px;
  background: #a3a3a3;
}
.bubble {
  position: absolute;
  right: 15px;
  top: 804px;
  width: 50px;
  height: 45px;
  border-radius: 23px 0 0 23px;
  background: #111;
  box-shadow: 0 0 6px rgba(0, 0, 0, 0.4);
  display: flex;
  align-items: center;
  padding-left: 9px;
}

/* windows taskbar */
.taskbar {
  flex: 0 0 40px;
  display: flex;
  background: #1e1e1e;
  color: #eee;
  font-family: "Open Sans", sans-serif;
}
.start {
  flex: 0 0 49px;
  display: flex;
  align-items: center;
  justify-content: center;
}
.search {
  flex: 0 0 286px;
  display: flex;
  align-items: center;
  padding-left: 11px;
  background: #333;
  border: 1px solid #555;
  border-width: 1px 1px 0;
}
.search-text {
  margin-left: 9px;
  font-size: 14px;
  color: #ccc;
  white-space: nowrap;
}
.sparkles {
  margin-left: auto;
  margin-right: 8px;
}
.tb-slot {
  flex: 0 0 49px;
  height: 40px;
  display: flex;
  align-items: center;
  justify-content: center;
  position: relative;
}
.tb-slot.taskview {
  flex-basis: 48px;
}
.tb-apps {
  display: flex;
  margin-left: 3px;
}
.app {
  width: 24px;
  height: 24px;
}
.tb-slot.open {
  box-shadow: inset 0 -2px 0 #5a9bd0;
}
.tb-slot.active {
  background: #555;
}
.tb-slot.notify {
  background: #a0602c;
  box-shadow: inset 0 -2px 0 #f57c00;
}
.count {
  position: absolute;
  left: 21px;
  top: 18px;
  padding: 0 4px;
  border: 1px solid #999;
  border-radius: 9px;
  background: #333;
  font-size: 10px;
  font-weight: 600;
  line-height: 13px;
  color: #eee;
}
.count.red {
  left: 24px;
  padding: 0 2px;
  border-color: #1e1e1e;
  background: #d01b4c;
}
.avatar.small {
  position: absolute;
  left: 26px;
  top: 18px;
  width: 17px;
  height: 17px;
}
.pc-label {
  position: absolute;
  left: 17px;
  top: 11px;
  font-size: 8px;
  font-weight: 700;
  color: #fff;
}
.tray {
  margin-left: auto;
  display: flex;
  align-items: center;
  font-size: 13px;
  color: #eee;
}
.sun {
  position: relative;
  width: 20px;
  height: 20px;
  margin-right: 10px;
  border-radius: 50%;
  background: linear-gradient(135deg, #f8c02c, #ee6a10);
}
.sun-badge {
  position: absolute;
  right: -4px;
  top: -2px;
  width: 11px;
  height: 11px;
  border-radius: 50%;
  background: #c8281e;
  font-size: 7px;
  line-height: 11px;
  text-align: center;
  color: #fff;
}
.temp {
  margin-right: 9px;
}
.cond {
  margin-right: 24px;
}
.tray-ic {
  width: 14px;
  height: 14px;
  margin-right: 10px;
}
.lang {
  font-size: 11px;
}
.clock {
  display: flex;
  flex-direction: column;
  align-items: center;
  width: 72px;
  margin-left: 4px;
  font-size: 12px;
  line-height: 18px;
}
.notif {
  margin-left: 7px;
}
.show-desktop {
  width: 1px;
  height: 40px;
  margin-left: 20px;
  margin-right: 4px;
  background: #555;
}
```
